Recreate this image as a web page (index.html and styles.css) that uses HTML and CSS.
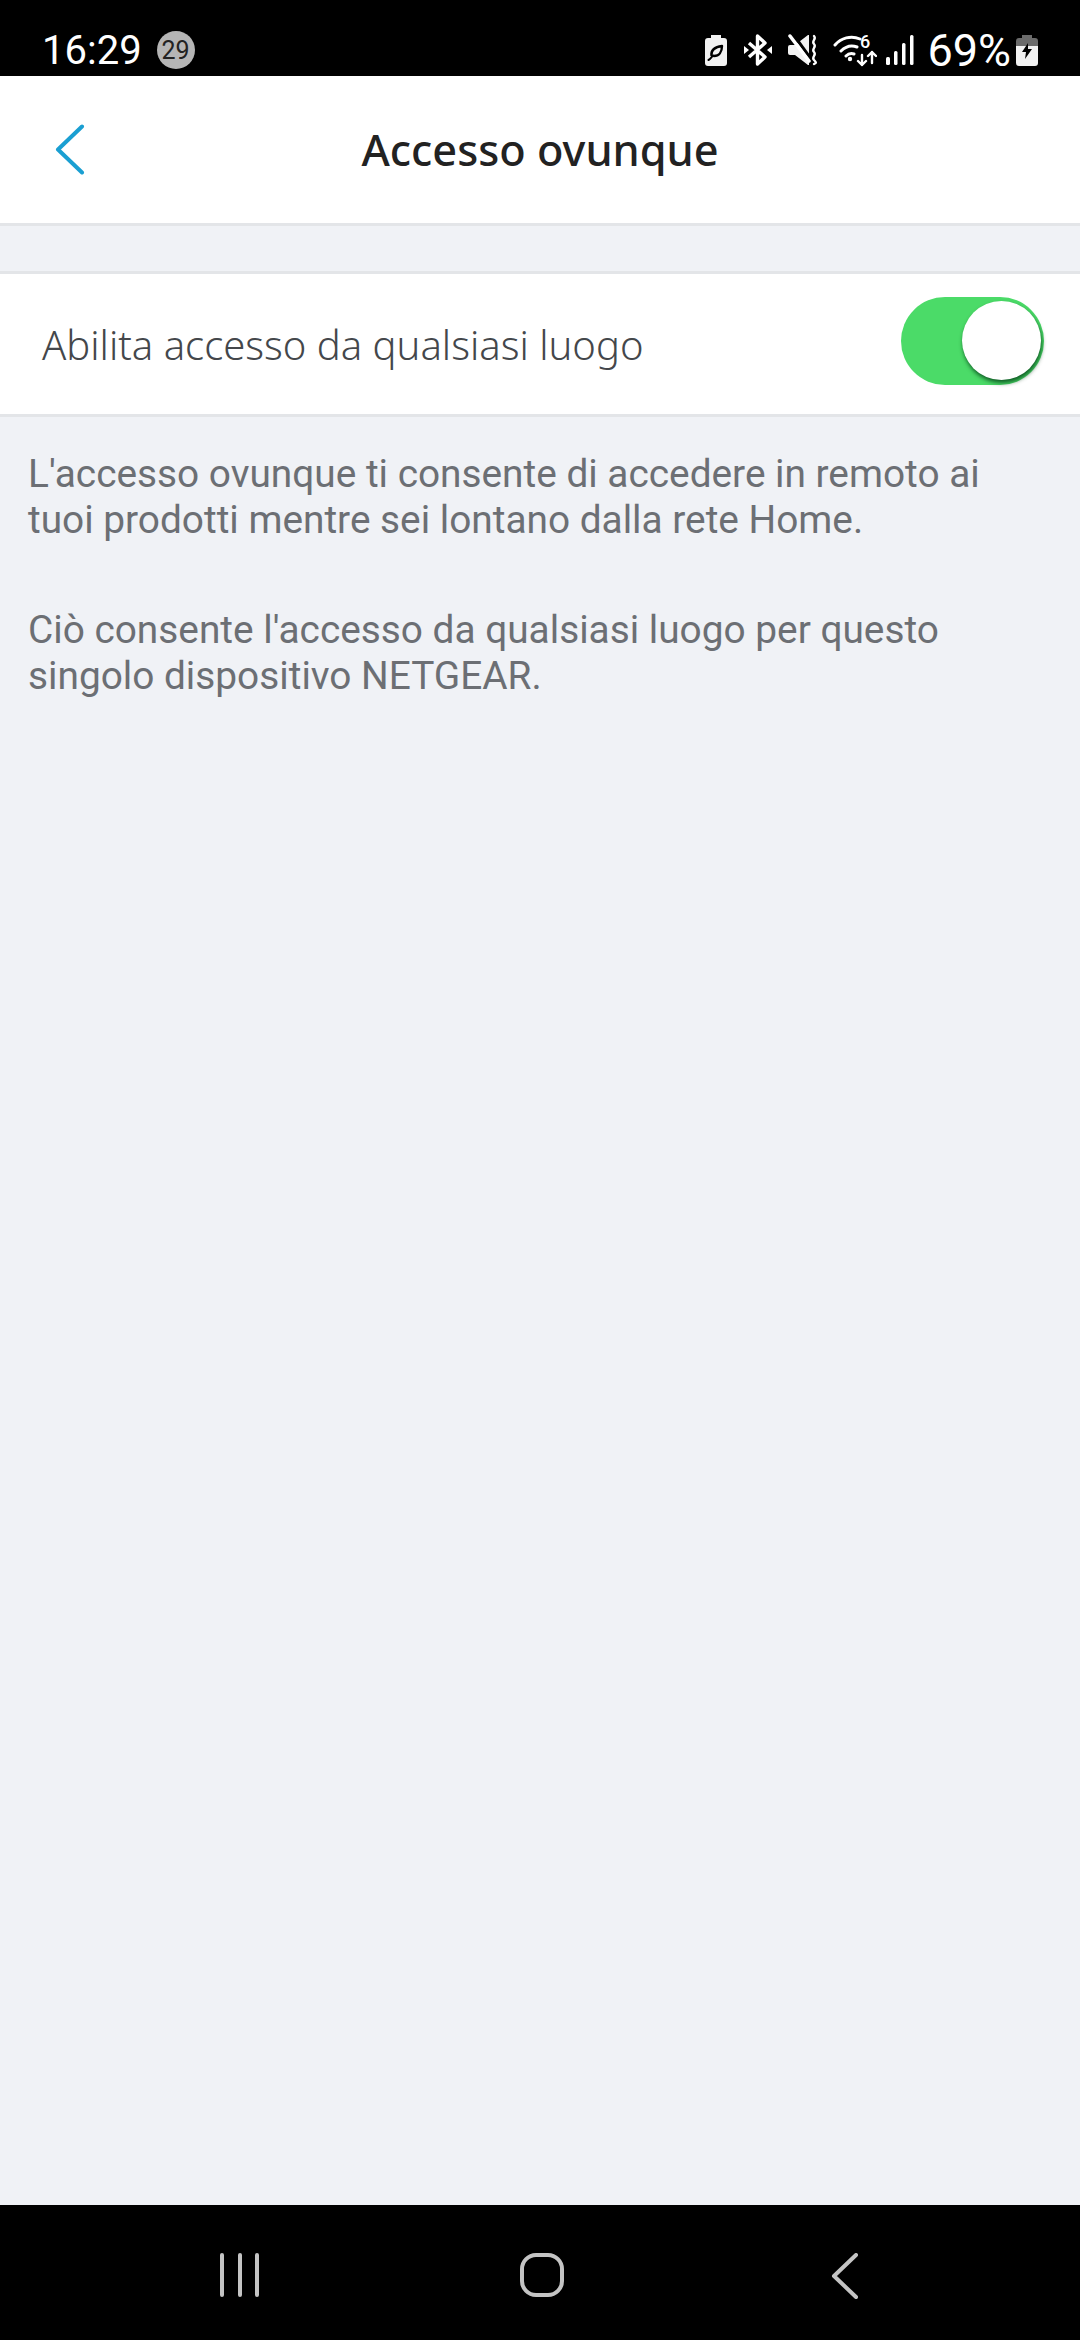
FILE: index.html
```html
<!DOCTYPE html>
<html lang="it">
<head>
  <meta charset="UTF-8" />
  <meta name="viewport" content="width=device-width, initial-scale=1" />
  <title>Accesso ovunque</title>
  <link rel="stylesheet" href="styles.css">
</head>
<body>
  <div class="statusbar">
    <div class="status-left">
      <span class="time">16:29</span>
      <span class="badge">29</span>
    </div>
    <div class="status-right">
      <!-- eco battery -->
      <svg class="ic-eco" width="22" height="31" viewBox="0 0 22 31">
        <path fill="#f2f2f2" d="M6 0h10v3h3a3 3 0 0 1 3 3v22a3 3 0 0 1-3 3H3a3 3 0 0 1-3-3V6a3 3 0 0 1 3-3h3z"/>
        <path fill="none" stroke="#000" stroke-width="2.400" stroke-linejoin="round" d="M17 11c0 6-3 10-8 10-1 0-2-.3-2.600-.8C6 15 10 12 17 11z"/>
        <path fill="none" stroke="#000" stroke-width="2" stroke-linecap="round" d="M3.500 25c2-1 3-3 4.500-4.500"/>
      </svg>
      <!-- bluetooth -->
      <svg class="ic-bt" width="28" height="32" viewBox="0 0 28 32">
        <path fill="none" stroke="#fff" stroke-width="3.400" stroke-linejoin="round" d="M5 9l16 14-7.500 7V2L21 9 5 23"/>
        <path fill="#fff" d="M0 12l5 4-5 4zM28 12l-5 4 5 4z"/>
      </svg>
      <!-- vibrate / mute -->
      <svg class="ic-mute" width="30" height="32" viewBox="0 0 30 32">
        <path fill="#f2f2f2" d="M2 11h5L20 1h1v30h-1L7 21H2a2 2 0 0 1-2-2v-6a2 2 0 0 1 2-2z"/>
        <path fill="none" stroke="#000" stroke-width="3" d="M5 0l18 25"/>
        <path fill="none" stroke="#fff" stroke-width="3.500" stroke-linecap="round" d="M2 2l19 25"/>
        <path fill="none" stroke="#fff" stroke-width="2.400" stroke-linecap="round" d="M26 2c3 3-3 5 0 8s-3 5 0 8 -3 5 0 8 2 3 0 4"/>
      </svg>
      <!-- wifi 6 -->
      <svg class="ic-wifi" width="44" height="40" viewBox="0 -4 44 40">
        <path fill="none" stroke="#fff" stroke-width="3" stroke-linecap="round" d="M2 11C8 4 18 1 27 5M8 17c5-5 11-6 16-4M13 22c2-2 5-3 8-2"/>
        <circle cx="17" cy="25" r="2.200" fill="#fff"/>
        <text class="wifi-six" x="27" y="14">6</text>
        <path fill="none" stroke="#fff" stroke-width="2.400" stroke-linecap="round" stroke-linejoin="round" d="M29 21v10M25 27l4 4 4-4M39 29V18M35 22l4-4 4 4"/>
      </svg>
      <!-- signal -->
      <svg class="ic-signal" width="28" height="30" viewBox="0 0 28 30">
        <rect x="0" y="22" width="4" height="8" rx="1.500" fill="#fff"/>
        <rect x="8" y="16" width="3.500" height="14" rx="1.500" fill="#fff"/>
        <rect x="16" y="8" width="3.500" height="22" rx="1.500" fill="#fff"/>
        <rect x="24" y="0" width="3.500" height="30" rx="1.500" fill="#fff"/>
      </svg>
      <span class="percent">69%</span>
      <!-- charging battery -->
      <svg class="ic-batt" width="22" height="31" viewBox="0 0 22 31">
        <path fill="#6b6b6b" d="M6 0h10v3h3a3 3 0 0 1 3 3v5H0V6a3 3 0 0 1 3-3h3z"/>
        <path fill="#f2f2f2" d="M0 11h22v17a3 3 0 0 1-3 3H3a3 3 0 0 1-3-3z"/>
        <path fill="#000" d="M12 8L6 17h4l-1 7 7-10h-4z"/>
      </svg>
    </div>
  </div>

  <header class="topbar">
    <div class="back-wrap">
      <svg width="30" height="51" viewBox="0 0 30 51">
        <path fill="none" stroke="#1a9fd2" stroke-width="4" stroke-linecap="round" stroke-linejoin="round" d="M27 2.500L3 25.500l24 23"/>
      </svg>
    </div>
    <h1>Accesso ovunque</h1>
    <div></div>
  </header>

  <main>
    <div class="row">
      <span class="row-label">Abilita accesso da qualsiasi luogo</span>
      <div class="toggle"><span class="knob"></span></div>
    </div>
    <div class="info">
      <p>L'accesso ovunque ti consente di accedere in remoto ai tuoi prodotti mentre sei lontano dalla rete Home.</p>
      <p>Ciò consente l'accesso da qualsiasi luogo per questo singolo dispositivo NETGEAR.</p>
    </div>
  </main>

  <nav class="navbar">
    <svg width="44" height="44" viewBox="0 0 44 44">
      <path stroke="#c4c4c4" stroke-width="4" stroke-linecap="round" d="M4 2v40M22 2v40M39 2v40"/>
    </svg>
    <svg width="44" height="44" viewBox="0 0 44 44">
      <rect x="2" y="2" width="40" height="40" rx="14" fill="none" stroke="#c4c4c4" stroke-width="4"/>
    </svg>
    <svg width="28" height="46" viewBox="0 0 28 46">
      <path fill="none" stroke="#c4c4c4" stroke-width="4" stroke-linecap="round" stroke-linejoin="round" d="M25 2L3 23l22 21"/>
    </svg>
  </nav>
</body>
</html>
```

FILE: styles.css
```css
* {
  box-sizing: border-box;
}
body {
  margin: 0;
  width: 1080px;
  height: 2340px;
  display: flex;
  flex-direction: column;
  background-color: #f0f2f6;
  font-family: Roboto, sans-serif;
  overflow: hidden;
}
.statusbar {
  height: 76px;
  background: #000;
  color: #fff;
  display: flex;
  justify-content: space-between;
  align-items: center;
  padding: 24px 42px 0 42px;
}
.status-left {
  display: flex;
  align-items: center;
  gap: 15px;
}
.time {
  font-size: 40px;
  font-weight: 400;
}
.badge {
  width: 38px;
  height: 38px;
  border-radius: 50%;
  background: #b5b5b5;
  color: #222;
  font-size: 25px;
  display: flex;
  align-items: center;
  justify-content: center;
}
.status-right {
  display: flex;
  align-items: center;
}
.ic-bt { margin-left: 17px; }
.ic-mute { margin-left: 16px; }
.ic-wifi { margin-left: 15px; }
.ic-signal { margin-left: 9px; }
.percent {
  font-size: 45px;
  margin-left: 13px;
  margin-right: 5px;
}
.wifi-six {
  font-family: Roboto, sans-serif;
  font-size: 18px;
  font-weight: 500;
  fill: #fff;
}
.topbar {
  height: 150px;
  background: #fff;
  border-bottom: 3px solid #e3e5e8;
  display: grid;
  grid-template-columns: 1fr auto 1fr;
  align-items: center;
}
.back-wrap {
  padding-left: 55px;
  display: flex;
}
.topbar h1 {
  margin: 0;
  font-family: "Noto Sans", sans-serif;
  font-size: 43.300px;
  font-weight: 500;
  color: #222;
}
main {
  flex: 1;
  padding-top: 45px;
}
.row {
  height: 146px;
  background: #fff;
  border-top: 3px solid #e3e5e8;
  border-bottom: 3px solid #e3e5e8;
  display: flex;
  justify-content: space-between;
  align-items: center;
  padding: 0 36px 0 42px;
}
.row-label {
  font-family: "Noto Sans", sans-serif;
  font-size: 40px;
  font-weight: 300;
  color: #44474b;
}
.toggle {
  position: relative;
  width: 143px;
  height: 88px;
  margin-bottom: 6px;
  border-radius: 44px;
  background: #4bdb68;
}
.knob {
  position: absolute;
  top: 4px;
  right: 3px;
  width: 79px;
  height: 79px;
  border-radius: 50%;
  background: #fff;
  box-shadow: 1px 3px 4px rgba(0, 60, 20, 0.8);
}
.info {
  padding: 34px 60px 0 28px;
  color: #6c6f74;
  font-size: 38.800px;
  line-height: 46px;
}
.info p {
  margin: 0 0 64px;
}
.navbar {
  height: 135px;
  background: #000;
  display: grid;
  grid-template-columns: 1fr 1fr 1fr;
  justify-items: center;
  align-items: start;
  padding: 48px 84px 0 89px;
}
```
